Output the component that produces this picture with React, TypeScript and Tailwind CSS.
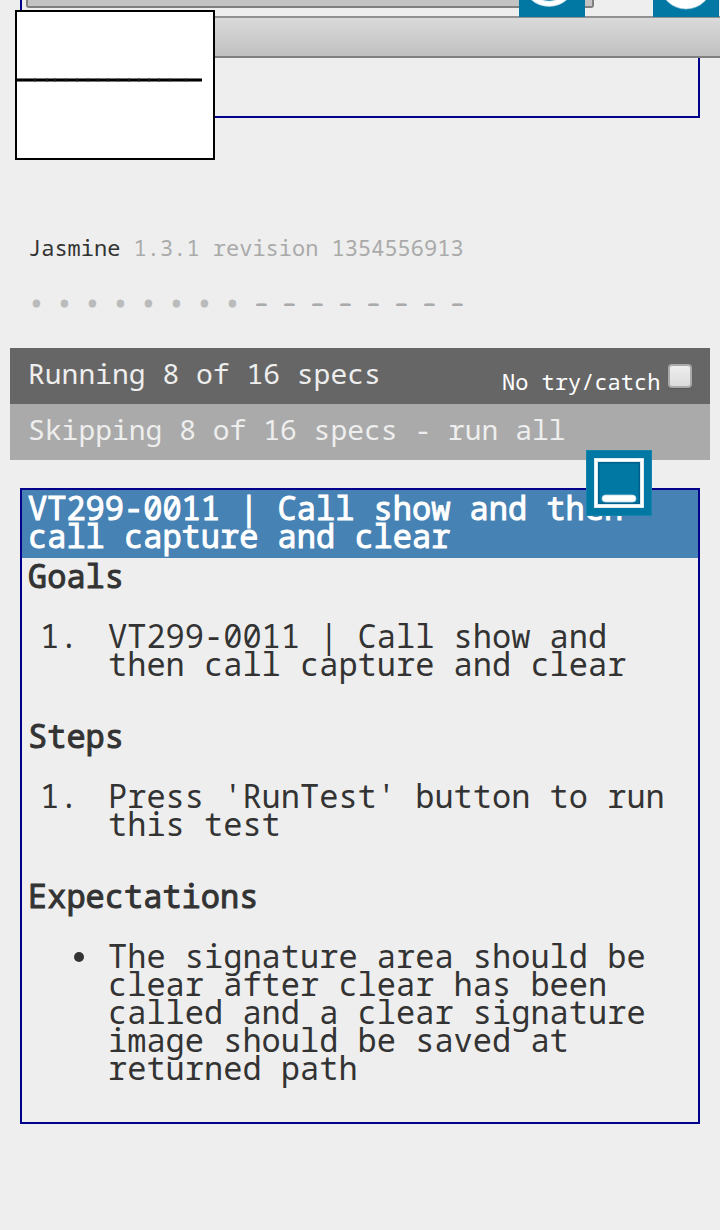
import type { ReactNode } from "react";

const specs = ["•", "•", "•", "•", "•", "•", "•", "•", "-", "-", "-", "-", "-", "-", "-", "-"];

function Section({ title, marker, children }: { title: string; marker: string; children: ReactNode }) {
  return (
    <section className="px-1.5 pt-1 pb-2">
      <h2 className="[-webkit-text-stroke:1px_#333]">{title}</h2>
      <div className="my-8 flex">
        {marker === "1." ? (
          <span className="w-20 shrink-0 pl-[12px]">{marker}</span>
        ) : (
          <span className="flex h-7 w-20 shrink-0 items-start pt-[10px] pl-[46px]">
            <i className="h-[10px] w-[10px] rounded-full bg-[#333]" />
          </span>
        )}
        <p className="whitespace-nowrap">{children}</p>
      </div>
    </section>
  );
}

export default function App() {
  return (
    <div className="relative h-[1230px] w-[720px] overflow-hidden bg-[#eee] font-['Droid_Sans_Mono','Noto_Sans_Mono','DejaVu_Sans_Mono',monospace] text-[32px] leading-7 text-[#333]">
      <div className="mx-5 h-[118px] border-x-2 border-b-2 border-[#00008b]">
        <div className="ml-1 h-2 w-[568px] rounded-b-[3px] border-2 border-t-0 border-[#808080] bg-[#c3c3c3]" />
        <div className="mt-2 h-[42px] w-[760px] border-y-2 border-t-[#919191] border-b-[#808080] bg-linear-to-b from-[#dadada] to-[#c0c0c0]" />
      </div>

      <div className="mt-[115px] ml-7 flex h-7 items-center gap-[13.2px] text-[22px]">
        <span>Jasmine</span>
        <span className="text-[#aaa]">1.3.1 revision 1354556913</span>
      </div>
      <ul className="mt-[26px] ml-7 flex h-7 text-[28px]">
        {specs.map((s, i) => (
          <li
            key={i}
            className={
              s === "•"
                ? "w-7 pt-0.5 text-[#bbb] [-webkit-text-stroke:1.2px_#bbb]"
                : "w-7 pl-px text-[#aaa] [text-shadow:1px_0_#aaa,-1px_0_#aaa]"
            }
          >
            {s}
          </li>
        ))}
      </ul>

      <div className="mx-2.5 mt-[33px] text-[28px] text-[#eee]">
        <div className="flex h-14 justify-between bg-[#666] px-[18px]">
          <span className="pt-[11px]">Running 8 of 16 specs</span>
          <label className="flex text-[22px] text-white">
            <span className="pt-[19px]">No try/catch</span>
            <i className="mt-4 ml-[7.6px] h-6 w-6 rounded-[4px] border-2 border-[#aaa] bg-linear-to-b from-[#eee] to-[#dcdcdc] shadow-[0_1px_1px_#555]" />
          </label>
        </div>
        <div className="h-14 bg-[#aaa] px-[18px] pt-[11px]">Skipping 8 of 16 specs - run all</div>
      </div>

      <main className="mx-5 mt-7 h-[636px] border-2 border-[#00008b]">
        <h1 className="bg-[#4682b4] px-1.5 pt-1 pb-2 whitespace-nowrap text-white [-webkit-text-stroke:1px_#fff]">
          VT299-0011 | Call show and then<br />call capture and clear
        </h1>
        <Section title="Goals" marker="1.">VT299-0011 | Call show and<br />then call capture and clear</Section>
        <Section title="Steps" marker="1.">Press 'RunTest' button to run<br />this test</Section>
        <Section title="Expectations" marker="•">
          The signature area should be<br />clear after clear has been<br />called and a clear signature<br />image should be saved at<br />returned path
        </Section>
      </main>

      <svg className="absolute top-0 left-[519px]" width="66" height="17">
        <rect width="66" height="17" fill="#0078a3" />
        <circle cx="30" cy="-20.3" r="24" fill="none" stroke="#d5eaf1" strokeWidth="6" />
        <circle cx="30" cy="-20.3" r="24" fill="none" stroke="#fff" strokeWidth="4" />
      </svg>
      <svg className="absolute top-0 left-[653px]" width="66" height="17">
        <rect width="66" height="17" fill="#0078a3" />
        <circle cx="33" cy="-16.9" r="26" fill="#fff" stroke="#9dcbdb" strokeWidth="0.6" />
      </svg>
      <svg className="absolute top-[10px] left-[15px]" width="200" height="150">
        <rect x="1" y="1" width="198" height="148" fill="#fff" stroke="#000" strokeWidth="2" />
        <path d="M2 70H187" stroke="#777" strokeWidth="4" />
        <path d="M2 70H187" stroke="#000" strokeWidth="2" />
        <path d="M20 68v4M32 68v4M40 68v4M51 68v4M62 68v4M73 68v4M83 68v4M93 68v4M103 68v4M114 68v4M124 68v4M134 68v4M144 68v4M155 68v4M171 68v4" stroke="#333" />
      </svg>
      <svg className="absolute top-[450px] left-[586px]" width="66" height="66">
        <rect width="66" height="66" fill="#0078a3" />
        <rect x="0.5" y="0.5" width="65" height="65" fill="none" stroke="#1683aa" />
        <rect x="12.5" y="12.5" width="41" height="41" fill="none" stroke="#00608d" strokeWidth="2" />
        <rect x="10" y="10" width="46" height="46" fill="none" stroke="#d9ecf2" strokeWidth="4" />
        <rect x="10" y="10" width="46" height="46" fill="none" stroke="#fff" strokeWidth="2" />
        <rect x="16" y="45" width="34" height="7" rx="3.5" fill="#fff" stroke="#b2d5e2" strokeWidth="0.8" />
      </svg>
    </div>
  );
}
